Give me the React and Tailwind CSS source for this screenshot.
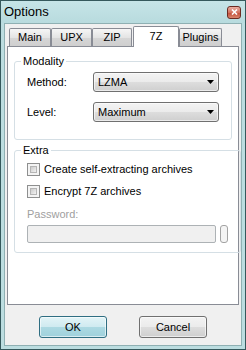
import React from "react";

const font = { fontFamily: '"Liberation Sans", Arial, sans-serif' };

const Tab = ({ label, width, active }) =>
  active ? (
    <div
      className={`${width} h-[21px] ml-[1px] bg-white border border-b-0 border-[#898c95] rounded-t-[2px] flex items-center justify-center pb-[2px]`}
    >
      {label}
    </div>
  ) : (
    <div
      className={`${width} h-[18px] mb-[1px] border border-b-0 border-[#898c95] rounded-t-[2px] bg-[linear-gradient(to_bottom,#f6f6f6,#e4e4e4_50%,#d6d6d6_51%,#cfcfcf)] flex items-center justify-center`}
    >
      {label}
    </div>
  );

const Combo = ({ value }) => (
  <div className="w-[126px] h-[20px] border border-[#707070] rounded-[3px] bg-[linear-gradient(to_bottom,#f3f3f3,#ebebeb_50%,#dddddd_51%,#cfcfcf)] shadow-[inset_0_0_0_1px_rgba(255,255,255,0.6)] flex items-center justify-between pl-[4px] pr-[4px]">
    <span>{value}</span>
    <svg width="7" height="4" viewBox="0 0 7 4">
      <path d="M0 0h7L3.5 4z" fill="#000" />
    </svg>
  </div>
);

const Check = ({ label }) => (
  <div className="flex items-center gap-[4px] h-[13px]">
    <div className="w-[13px] h-[13px] border border-[#8e8f8f] bg-[#f4f4f4] p-[2px]">
      <div className="w-full h-full border border-[#b5b5b5] bg-[linear-gradient(135deg,#cbcbcb,#f2f2f2)]" />
    </div>
    <span>{label}</span>
  </div>
);

const Group = ({ title, className, children }) => (
  <fieldset
    className={`mx-[6px] border border-[#d5dfe5] rounded-[3px] px-[12px] ${className}`}
  >
    <legend className="ml-[-6px] px-[2px] leading-[13px]">{title}</legend>
    {children}
  </fieldset>
);

const App = () => {
  return (
    <div
      style={font}
      className="w-[246px] h-[350px] flex flex-col bg-[#bcdde0] border border-[#35585c] text-[11px] text-black overflow-hidden"
    >
      <div className="h-[22px] flex items-center justify-between pl-[3px] pr-[4px] bg-[linear-gradient(to_bottom,#c6e4e7,#b8dbde)]">
        <span className="text-[13px]">Options</span>
        <div className="w-[14px] h-[13px] rounded-[3px] border border-[#6b2b22] bg-[linear-gradient(to_bottom,#eab0a3,#d2705d_50%,#c24a35_51%,#d9866e)] flex items-center justify-center">
          <svg width="7" height="6" viewBox="0 0 7 6">
            <path d="M1 0.5l5 5M6 0.5l-5 5" stroke="#fff" strokeWidth="1.6" />
          </svg>
        </div>
      </div>

      <div className="flex-1 mx-[3px] mb-[3px] bg-[#f0f0f0] border border-[#8fb0b3] flex flex-col">
        <div className="relative z-10 flex items-end ml-[4px] mt-[2px] -mb-[1px]">
          <Tab label="Main" width="w-[42px]" />
          <Tab label="UPX" width="w-[41px]" />
          <Tab label="ZIP" width="w-[40px]" />
          <Tab label="7Z" width="w-[46px]" active />
          <Tab label="Plugins" width="w-[43px]" />
        </div>

        <div className="ml-[2px] w-[232px] h-[259px] bg-white border border-[#898c95] flex flex-col">
          <Group title="Modality" className="mt-[8px] pt-[4px] pb-[17px]">
            <div className="flex items-center">
              <span className="w-[66px]">Method:</span>
              <Combo value="LZMA" />
            </div>
            <div className="flex items-center mt-[10px]">
              <span className="w-[66px]">Level:</span>
              <Combo value="Maximum" />
            </div>
          </Group>

          <Group title="Extra" className="mt-[4px] pt-[6px] pb-[9px]">
            <Check label="Create self-extracting archives" />
            <div className="mt-[9px]">
              <Check label="Encrypt 7Z archives" />
            </div>
            <div className="mt-[10px] leading-[13px] text-[#a0a0a0]">Password:</div>
            <div className="mt-[4px] flex items-center gap-[4px]">
              <div className="w-[189px] h-[18px] bg-[#f0f0f0] border border-[#adb2b5] rounded-[2px]" />
              <div className="w-[8px] h-[18px] bg-[#f4f4f4] border border-[#a3a3a3] rounded-[3px]" />
            </div>
          </Group>
        </div>

        <div className="mt-[11px] flex justify-center gap-[32px]">
          <button className="w-[68px] h-[22px] border border-[#2f6e82] rounded-[3px] bg-[linear-gradient(to_bottom,#e3f4f7,#cfeaf0_50%,#acd9e2_51%,#9fd1dc)] shadow-[inset_0_0_0_1px_rgba(255,255,255,0.6)]">
            OK
          </button>
          <button className="w-[68px] h-[22px] border border-[#707070] rounded-[3px] bg-[linear-gradient(to_bottom,#f3f3f3,#ebebeb_50%,#dddddd_51%,#cfcfcf)] shadow-[inset_0_0_0_1px_rgba(255,255,255,0.6)]">
            Cancel
          </button>
        </div>
      </div>
    </div>
  );
};

export default App;
